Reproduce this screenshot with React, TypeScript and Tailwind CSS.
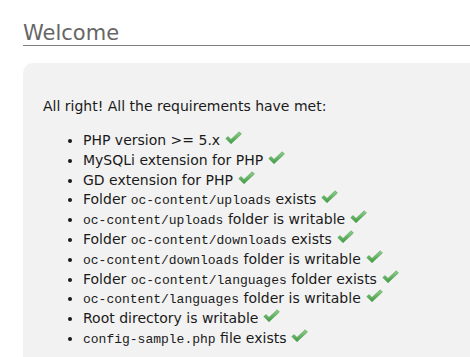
import React from 'react'

const Check = () => (
  <svg className="ml-[5px] inline-block align-[-1px]" width="17" height="15" viewBox="0 0 17 15" aria-hidden="true">
    <defs>
      <linearGradient id="ck" x1="0" y1="0" x2="0" y2="1">
        <stop offset="0" stopColor="#8fd08f" />
        <stop offset="1" stopColor="#3f9a3f" />
      </linearGradient>
    </defs>
    <path d="M0.8 7.6 L3 5.6 L6 8.4 L14.2 0.8 L16.4 3 L6 12.8 Z" fill="url(#ck)" stroke="#4f9f4f" strokeWidth="0.6" strokeLinejoin="round" />
  </svg>
)

const Code = ({ children }: { children: React.ReactNode }) => (
  <span className="font-['Courier_New','Liberation_Mono',monospace] text-[13px] leading-none">{children}</span>
)

const items: React.ReactNode[] = [
  <>PHP version &gt;= 5.x</>,
  <>MySQLi extension for PHP</>,
  <>GD extension for PHP</>,
  <>Folder <Code>oc-content/uploads</Code> exists</>,
  <><Code>oc-content/uploads</Code> folder is writable</>,
  <>Folder <Code>oc-content/downloads</Code> exists</>,
  <><Code>oc-content/downloads</Code> folder is writable</>,
  <>Folder <Code>oc-content/languages</Code> folder exists</>,
  <><Code>oc-content/languages</Code> folder is writable</>,
  <>Root directory is writable</>,
  <><Code>config-sample.php</Code> file exists</>,
]

export default function App() {
  return (
    <div className="min-h-[357px] bg-white pl-[23px] font-['DejaVu_Sans',sans-serif] text-[#1a1a1a]">
      <h1 className="border-b border-[#808080] pt-[21px] text-[21px] leading-[24px] text-[#666]">Welcome</h1>
      <div className="mt-[17px] h-[294px] rounded-tl-[10px] bg-[#f2f2f2] pl-[20px] pt-[33px] text-[14px]">
        <p className="leading-[20px]">All right! All the requirements have met:</p>
        <ul className="mt-[15px] list-disc pl-[40px] leading-[19.8px]">
          {items.map((it, i) => (
            <li key={i}>
              {it}
              <Check />
            </li>
          ))}
        </ul>
      </div>
    </div>
  )
}
